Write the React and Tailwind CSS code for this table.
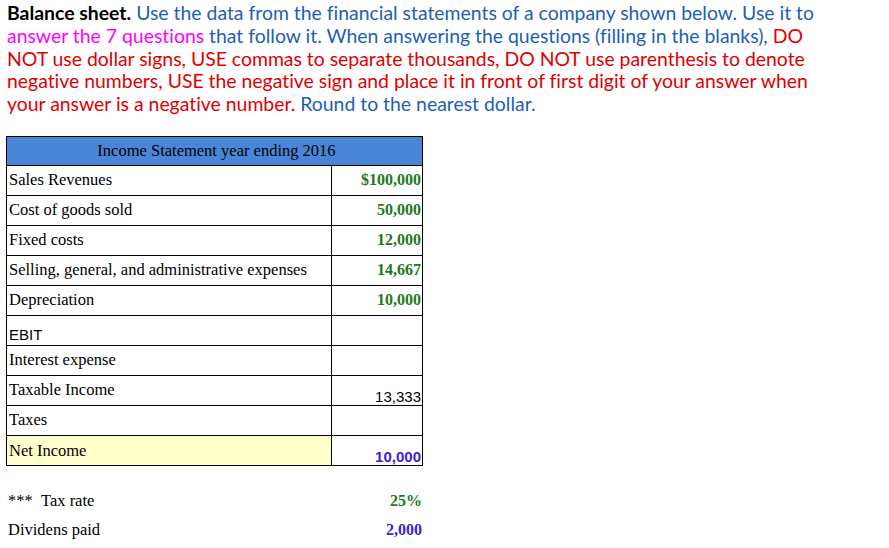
export default function App() {
  const rows = [
    { label: "Sales Revenues", value: "$100,000", kind: "green" },
    { label: "Cost of goods sold", value: "50,000", kind: "green" },
    { label: "Fixed costs", value: "12,000", kind: "green" },
    { label: "Selling, general, and administrative expenses", value: "14,667", kind: "green" },
    { label: "Depreciation", value: "10,000", kind: "green" },
    { label: "EBIT", value: "", kind: "ebit" },
    { label: "Interest expense", value: "", kind: "plain" },
    { label: "Taxable Income", value: "13,333", kind: "arial" },
    { label: "Taxes", value: "", kind: "plain" },
    { label: "Net Income", value: "10,000", kind: "net" },
  ];
  const serif = "font-['Liberation_Serif','Times_New_Roman',serif]";
  return (
    <div className="w-[889px] h-[548px] bg-white overflow-hidden">
      <p className="pl-[7px] pt-[2px] text-[19.4px] leading-[22.75px] font-['Lato',sans-serif] text-[#1d5fb4] [font-variant-ligatures:none] whitespace-nowrap">
        <span className="font-bold text-black">Balance sheet.</span> Use the data from the financial statements of a company shown below. Use it to
        <br />
        <span className="text-[#ff00ff]">answer the 7 questions</span> that follow it. When answering the questions (filling in the blanks), <span className="text-[#e00000]">DO</span>
        <br />
        <span className="text-[#e00000]">NOT use dollar signs, USE commas to separate thousands, DO NOT use parenthesis to denote</span>
        <br />
        <span className="text-[#e00000]">negative numbers, USE the negative sign and place it in front of first digit of your answer when</span>
        <br />
        <span className="text-[#e00000]">your answer is a negative number.</span> Round to the nearest dollar.
      </p>

      <div className={`mt-[20px] ml-[6px] w-[417px] border border-black ${serif} text-[16.5px] text-black`}>
        <div className="h-[29px] bg-[#4a86d8] flex items-center justify-center border-b border-black">
          <span className="pl-[4px] pt-[1px]">Income Statement year ending 2016</span>
        </div>
        {rows.map((r, i) => (
          <div
            key={i}
            className={`flex ${i < rows.length - 1 ? "h-[30px] border-b border-black" : "h-[29px]"}`}
          >
            <div
              className={`w-[325px] border-r border-black pl-[2px] flex ${
                r.kind === "ebit" ? "items-end pb-[3px]" : r.kind === "net" ? "items-start pt-[3px]" : "items-center"
              } ${r.kind === "net" ? "bg-[#ffffcc]" : ""}`}
            >
              {r.kind === "ebit" ? (
                <span className="font-['Liberation_Sans',Arial,sans-serif] text-[15px] leading-none">{r.label}</span>
              ) : (
                <span>{r.label}</span>
              )}
            </div>
            <div
              className={`flex-1 flex justify-end pr-[1px] ${
                r.kind === "arial" || r.kind === "net" ? "items-end pb-[1px]" : "items-center"
              }`}
            >
              {r.kind === "green" && <span className="font-bold text-[16px] text-[#1b7a1b]">{r.value}</span>}
              {r.kind === "arial" && (
                <span className="font-['Liberation_Sans',Arial,sans-serif] text-[15px] leading-none">{r.value}</span>
              )}
              {r.kind === "net" && (
                <span className="font-['Liberation_Sans',Arial,sans-serif] text-[15px] leading-none font-bold text-[#3b22d8]">
                  {r.value}
                </span>
              )}
            </div>
          </div>
        ))}
      </div>

      <div className={`ml-[8px] w-[414px] mt-[21px] ${serif} text-[16.5px] text-black`}>
        <div className="flex justify-between h-[29px] items-center">
          <span>***&nbsp;&nbsp;Tax rate</span>
          <span className="font-bold text-[16px] text-[#1b7a1b]">25%</span>
        </div>
        <div className="flex justify-between h-[29px] items-center">
          <span>Dividens paid</span>
          <span className="font-bold text-[16px] text-[#3b22d8]">2,000</span>
        </div>
      </div>
    </div>
  );
}
